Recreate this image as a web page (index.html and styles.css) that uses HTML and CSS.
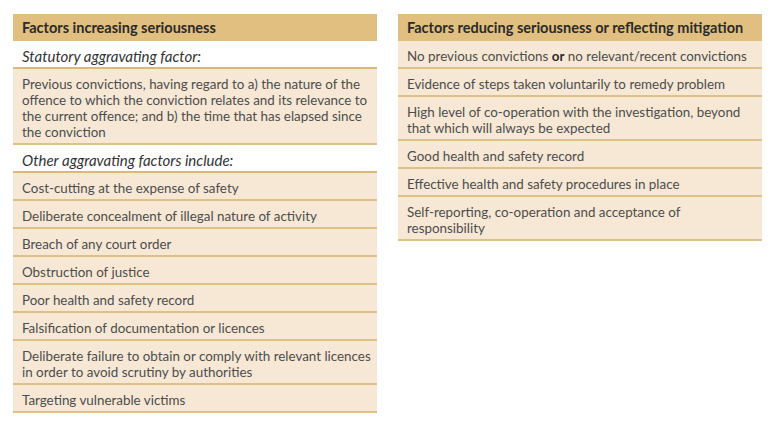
FILE: index.html
```html
<!DOCTYPE html>
<html lang="en">
<head>
<meta charset="utf-8">
<title>Factors</title>
<link rel="stylesheet" href="styles.css">
</head>
<body>
<div class="page">
  <div class="table">
    <div class="head">Factors increasing seriousness</div>
    <div class="sub">Statutory aggravating factor:</div>
    <div class="row">Previous convictions, having regard to a) the nature of the offence to which the conviction relates and its relevance to the current offence; and b) the time that has elapsed since the conviction</div>
    <div class="sub">Other aggravating factors include:</div>
    <div class="row">Cost-cutting at the expense of safety</div>
    <div class="row">Deliberate concealment of illegal nature of activity</div>
    <div class="row">Breach of any court order</div>
    <div class="row">Obstruction of justice</div>
    <div class="row">Poor health and safety record</div>
    <div class="row">Falsification of documentation or licences</div>
    <div class="row">Deliberate failure to obtain or comply with relevant licences in order to avoid scrutiny by authorities</div>
    <div class="row">Targeting vulnerable victims</div>
  </div>
  <div class="table">
    <div class="head">Factors reducing seriousness or reflecting mitigation</div>
    <div class="row">No previous convictions <b>or</b> no relevant/recent convictions</div>
    <div class="row">Evidence of steps taken voluntarily to remedy problem</div>
    <div class="row">High level of co-operation with the investigation, beyond that which will always be expected</div>
    <div class="row">Good health and safety record</div>
    <div class="row">Effective health and safety procedures in place</div>
    <div class="row">Self-reporting, co-operation and acceptance of responsibility</div>
  </div>
</div>
</body>
</html>
```
FILE: styles.css
```css
html, body {
  margin: 0;
  padding: 0;
  background: #ffffff;
}
.page {
  display: grid;
  grid-template-columns: 364px 364px;
  column-gap: 21px;
  align-items: start;
  padding: 14px 0 0 13px;
  font-family: "Lato", "Noto Sans", sans-serif;
}
.table {
  display: flex;
  flex-direction: column;
}
.head {
  background: #e1bf80;
  color: #2a2a2a;
  font-weight: 700;
  font-size: 14.5px;
  line-height: 16px;
  height: 27px;
  box-sizing: border-box;
  padding: 6px 9px 5px;
}
.sub {
  background: #ffffff;
  color: #333333;
  font-style: italic;
  font-size: 15px;
  line-height: 16px;
  padding: 7px 9px 3px;
  border-bottom: 2px solid #dcb978;
}
.row {
  background: #f6e8d5;
  color: #4d4d4d;
  font-size: 13.4px;
  line-height: 16px;
  padding: 7px 3px 3px 9px;
  border-bottom: 2px solid #e0c089;
}
.row b {
  color: #2a2a2a;
  font-weight: 700;
}
```
